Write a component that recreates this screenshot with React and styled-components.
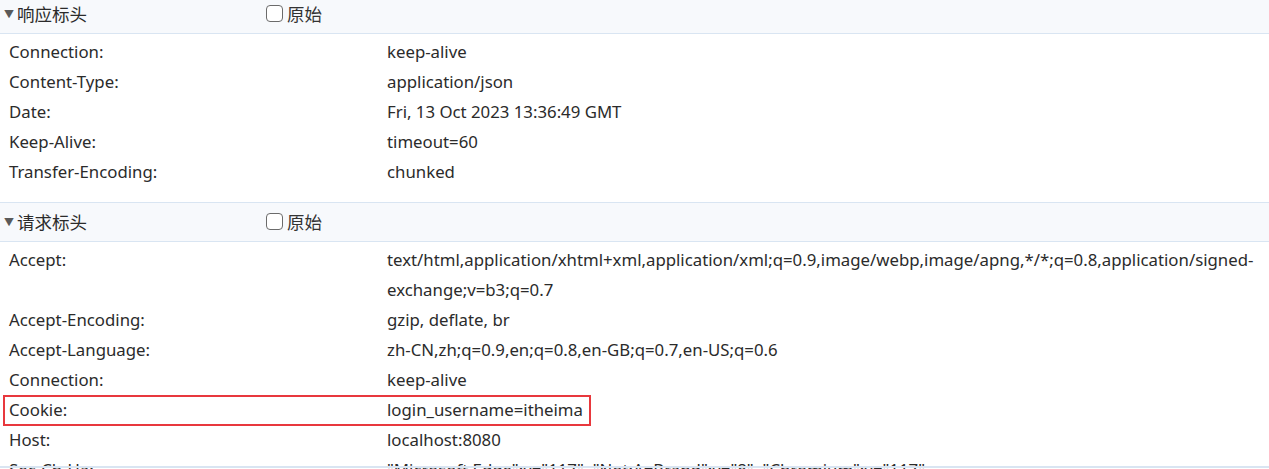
import React from 'react';
import styled, { createGlobalStyle } from 'styled-components';

const GlobalStyle = createGlobalStyle`
  html, body {
    margin: 0;
    padding: 0;
    background: #ffffff;
    overflow: hidden;
  }
  body {
    font-family: "Noto Sans", "Noto Sans CJK SC", sans-serif;
    color: #2b2b2b;
  }
`;

const Panel = styled.div`
  margin-top: -6px;
`;

const SectionHeader = styled.div`
  display: flex;
  align-items: center;
  height: 40px;
  background: #f7f9fc;
  border-top: 1px solid #d9e5f2;
  border-bottom: 1px solid #d9e5f2;
  font-size: 17.5px;
  padding-bottom: 2px;
  box-sizing: border-box;
`;

const Title = styled.div`
  display: flex;
  align-items: center;
  width: 266px;
  padding-left: 4px;
  box-sizing: border-box;
`;

const Caret = styled.span`
  font-size: 10px;
  color: #5a5a5a;
  margin-right: 3px;
`;

const RawToggle = styled.label`
  display: flex;
  align-items: center;
  gap: 4px;
  color: #333;
`;

const Box = styled.span`
  width: 17px;
  height: 17px;
  border: 1.5px solid #6b6b6b;
  border-radius: 4px;
  box-sizing: border-box;
  background: #fff;
`;

const Body = styled.div`
  padding: 3px 10px 15px 9px;
`;

const Row = styled.div`
  display: grid;
  grid-template-columns: 378px 1fr;
  line-height: 30px;
  font-size: 16.8px;
  position: relative;
`;

const Key = styled.div`
  white-space: nowrap;
`;

const Value = styled.div`
  overflow-wrap: normal;
`;

const Highlight = styled.div`
  position: absolute;
  left: -6px;
  top: 0;
  width: 588px;
  height: 31px;
  border: 2px solid #e8383d;
  box-sizing: border-box;
  pointer-events: none;
`;

const BottomEdge = styled.div`
  position: fixed;
  left: 0;
  right: 0;
  bottom: 1px;
  height: 2px;
  background: #d9e5f2;
`;

const responseHeaders = [
  ['Connection:', 'keep-alive'],
  ['Content-Type:', 'application/json'],
  ['Date:', 'Fri, 13 Oct 2023 13:36:49 GMT'],
  ['Keep-Alive:', 'timeout=60'],
  ['Transfer-Encoding:', 'chunked'],
];

const requestHeaders = [
  ['Accept:', 'text/html,application/xhtml+xml,application/xml;q=0.9,image/webp,image/apng,*/*;q=0.8,application/signed-exchange;v=b3;q=0.7'],
  ['Accept-Encoding:', 'gzip, deflate, br'],
  ['Accept-Language:', 'zh-CN,zh;q=0.9,en;q=0.8,en-GB;q=0.7,en-US;q=0.6'],
  ['Connection:', 'keep-alive'],
  ['Cookie:', 'login_username=itheima', true],
  ['Host:', 'localhost:8080'],
  ['Sec-Ch-Ua:', '"Microsoft Edge";v="117", "Not;A=Brand";v="8", "Chromium";v="117"'],
];

function Section({ title, rows }) {
  return (
    <>
      <SectionHeader>
        <Title><Caret>▼</Caret>{title}</Title>
        <RawToggle><Box />原始</RawToggle>
      </SectionHeader>
      <Body>
        {rows.map(([k, v, marked]) => (
          <Row key={k}>
            <Key>{k}</Key>
            <Value>{v}</Value>
            {marked && <Highlight />}
          </Row>
        ))}
      </Body>
    </>
  );
}

export default function App() {
  return (
    <Panel>
      <GlobalStyle />
      <Section title="响应标头" rows={responseHeaders} />
      <Section title="请求标头" rows={requestHeaders} />
      <BottomEdge />
    </Panel>
  );
}
